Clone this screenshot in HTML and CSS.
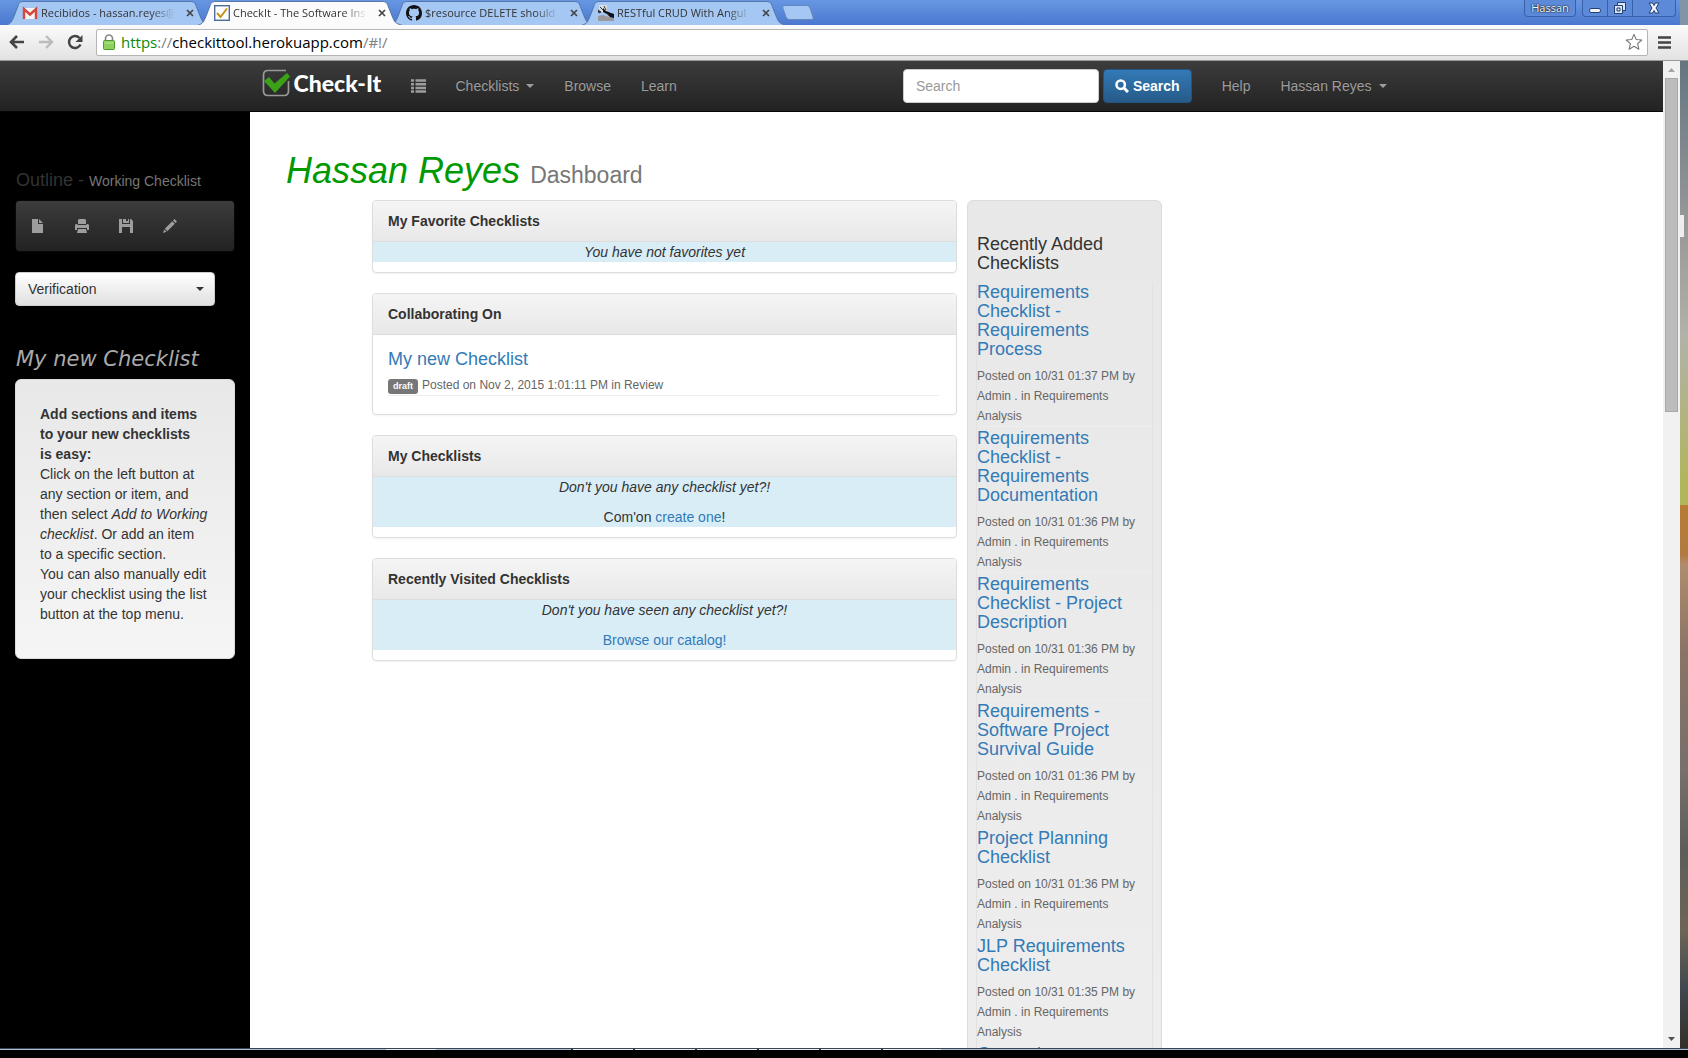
FILE: index.html
```html
<!DOCTYPE html>
<html lang="en">
<head>
<meta charset="utf-8">
<title>CheckIt - The Software Inspection Tool</title>
<link rel="stylesheet" href="styles.css">
</head>
<body>
<svg class="sprite" aria-hidden="true">
  <symbol id="tab-shape" viewBox="0 0 204 25" preserveAspectRatio="none">
    <path d="M0 25C5 24 6 21 8 16L12 5C13 1 15 .5 18 .5H184C188 .5 189 2 190 5L195 18C197 23 199 24 204 25Z" fill="currentColor"/>
    <path d="M0 25C5 24 6 21 8 16L12 5C13 1 15 .5 18 .5H184C188 .5 189 2 190 5L195 18C197 23 199 24 204 25" fill="none" stroke="#5574a8"/>
  </symbol>
  <symbol id="close" viewBox="0 0 8 8"><path d="M1 1l6 6M7 1L1 7" stroke="#444" stroke-width="1.7"/></symbol>
</svg>

<header class="chrome">
  <div class="tabstrip">
    <nav class="tabs" aria-label="Browser tabs">
      <div class="tab">
        <svg class="tab-bg"><use href="#tab-shape"/></svg>
        <svg class="favicon" viewBox="0 0 16 16"><rect x="1" y="3" width="14" height="11" fill="#f4f4f4"/><path d="M2 14V4l6 5.500 6-5.500V14" fill="none" stroke="#d5473b" stroke-width="2.400"/></svg>
        <span class="tab-title">Recibidos - hassan.reyes@</span>
        <button class="tab-close" aria-label="Close tab"><svg viewBox="0 0 8 8"><use href="#close"/></svg></button>
      </div>
      <div class="tab tab-active">
        <svg class="tab-bg"><use href="#tab-shape"/></svg>
        <svg class="favicon" viewBox="0 0 16 16"><rect x=".7" y=".7" width="14.600" height="14.600" fill="#fff" stroke="#4c6d99" stroke-width="1.400"/><path d="M3 8l3.500 4L13 3.500" fill="none" stroke="#c89116" stroke-width="2"/></svg>
        <span class="tab-title">CheckIt - The Software Ins</span>
        <button class="tab-close" aria-label="Close tab"><svg viewBox="0 0 8 8"><use href="#close"/></svg></button>
      </div>
      <div class="tab">
        <svg class="tab-bg"><use href="#tab-shape"/></svg>
        <svg class="favicon" viewBox="0 0 16 16"><path fill="#111" d="M8 0C3.580 0 0 3.580 0 8c0 3.540 2.290 6.530 5.470 7.590.4.070.550-.170.550-.380 0-.190-.010-.820-.010-1.490-2.010.370-2.530-.490-2.690-.940-.090-.230-.480-.940-.820-1.130-.280-.150-.680-.520-.010-.530.630-.010 1.080.580 1.230.820.720 1.210 1.870.870 2.330.660.070-.520.280-.870.510-1.070-1.780-.200-3.640-.890-3.640-3.950 0-.870.310-1.590.820-2.150-.080-.200-.360-1.020.080-2.120 0 0 .670-.210 2.200.820.640-.180 1.320-.270 2-.270s1.360.090 2 .270c1.530-1.040 2.200-.820 2.200-.820.440 1.100.160 1.920.080 2.120.510.560.820 1.270.820 2.150 0 3.070-1.870 3.750-3.650 3.950.290.250.540.730.540 1.480 0 1.070-.010 1.930-.010 2.200 0 .210.150.460.550.380A8.010 8.010 0 0 0 16 8c0-4.420-3.580-8-8-8z"/></svg>
        <span class="tab-title">$resource DELETE should</span>
        <button class="tab-close" aria-label="Close tab"><svg viewBox="0 0 8 8"><use href="#close"/></svg></button>
      </div>
      <div class="tab">
        <svg class="tab-bg"><use href="#tab-shape"/></svg>
        <svg class="favicon" viewBox="0 0 16 16"><path d="M1 0h8v7H1z" fill="#d9dde2"/><path d="M0 11l5-1 6 2 5-1v5H0z" fill="#999"/><path d="M5 3l3 3 5 2 3 1v4l-4-1-3-3-4-2z" fill="#111"/><path d="M0 5l3 2-2 1zM2 2l3 3M6 1l2 4" fill="#333" stroke="#333"/></svg>
        <span class="tab-title">RESTful CRUD With Angul</span>
        <button class="tab-close" aria-label="Close tab"><svg viewBox="0 0 8 8"><use href="#close"/></svg></button>
      </div>
      <button class="new-tab" aria-label="New tab"><svg viewBox="0 0 32 16"><path d="M3 .5H24C26 .5 27 1 28 3L31 12C31.500 14 31 14.500 29 14.500H8C6 14.500 5 14 4 12L.8 3C.4 1.500 1 .5 3 .5Z" fill="#a5c7f3" stroke="#6786bd"/></svg></button>
    </nav>
    <div class="window-controls">
      <button class="user-badge">Hassan</button>
      <div class="window-buttons">
        <button aria-label="Minimize"><svg viewBox="0 0 14 14"><path d="M3 7.500h8q1.500 0 1.500 2t-1.500 2H3q-1.500 0-1.500-2t1.500-2z" fill="#eef3fc" stroke="#24406f"/></svg></button>
        <button aria-label="Restore"><svg viewBox="0 0 14 14"><path d="M4.500 1.500h8v8h-3v3h-8v-8h3z" fill="#dbe6f9" stroke="#24406f"/><path d="M4.500 4.500h5v5M4 7h3v3H4z" fill="none" stroke="#24406f"/></svg></button>
        <button class="window-close" aria-label="Close"><svg viewBox="0 0 14 14"><path d="M2 2h3.500L7 4.500 8.500 2H12L9 7l3 5H8.500L7 9.500 5.500 12H2l3-5z" fill="#eef3fc" stroke="#24406f"/></svg></button>
      </div>
    </div>
    <div class="desktop-top"></div>
  </div>

  <div class="toolbar">
    <button class="tool" aria-label="Back"><svg viewBox="0 0 16 16"><path d="M15 8H2M8 2L2 8l6 6" fill="none" stroke="#444" stroke-width="2.600"/></svg></button>
    <button class="tool" aria-label="Forward"><svg viewBox="0 0 16 16"><path d="M1 8h13M8 2l6 6-6 6" fill="none" stroke="#bbb" stroke-width="2.400"/></svg></button>
    <button class="tool" aria-label="Reload"><svg viewBox="0 0 16 16"><path d="M13.500 10.500A6 6 0 1 1 12.500 4" fill="none" stroke="#444" stroke-width="2.500"/><path d="M15.500 1v7h-7z" fill="#444"/></svg></button>
    <div class="address">
      <svg class="lock" viewBox="0 0 12 16"><path d="M2.500 8V4.500a3.500 3.500 0 0 1 7 0V8" fill="none" stroke="#888" stroke-width="1.700"/><rect x=".5" y="6.500" width="11" height="9" rx="1" fill="#8ed05d" stroke="#4f9a2c"/><path d="M1.500 9h9" stroke="#b7e59a"/></svg>
      <p class="url"><span class="url-scheme">https</span><span class="url-dim">://</span>checkittool.herokuapp.com<span class="url-dim">/#!/</span></p>
      <button class="star" aria-label="Bookmark"><svg viewBox="0 0 20 20"><path d="M10 1.500l2.500 5.700 6.200.6-4.700 4.100 1.400 6.100L10 14.800 4.600 18 6 11.900 1.300 7.800l6.200-.6z" fill="#fff" stroke="#777" stroke-width="1.200" stroke-linejoin="round"/></svg></button>
    </div>
    <button class="menu" aria-label="Menu"><svg viewBox="0 0 13 13"><path d="M0 1.500h13M0 6.500h13M0 11.500h13" stroke="#444" stroke-width="2.500"/></svg></button>
  </div>
</header>

<div class="viewport">
  <div class="page">
    <header class="navbar">
      <div class="navbar-inner">
        <a class="brand" href="#">
          <svg viewBox="0 0 30 28"><path d="M24 1.500H6Q1.500 1.500 1.500 6V22Q1.500 26.500 6 26.500H22Q26.500 26.500 26.500 22V12" fill="none" stroke="#999" stroke-width="1.700"/><path d="M2 12l5-4 5.500 6.500L25 4l3 3.500L13 24Z" fill="#3ba218"/></svg>
          <span>Check-It</span>
        </a>
        <nav class="nav">
          <a href="#" aria-label="Outline"><svg class="icon list-icon" viewBox="0 0 15 14"><path d="M0 1.500h3M4.500 1.500H15M0 5.200h3M4.500 5.200H15M0 8.900h3M4.500 8.900H15M0 12.600h3M4.500 12.600H15" stroke="#9d9d9d" stroke-width="2.500"/></svg></a>
          <a href="#">Checklists<i class="caret"></i></a>
          <a href="#">Browse</a>
          <a href="#">Learn</a>
        </nav>
        <form class="search">
          <input type="text" placeholder="Search" aria-label="Search">
          <button type="button"><svg class="icon" viewBox="0 0 14 14"><circle cx="5.700" cy="5.700" r="4.200" fill="none" stroke="#fff" stroke-width="2.500"/><path d="M9 9l4 4" stroke="#fff" stroke-width="3"/></svg>Search</button>
        </form>
        <nav class="nav">
          <a href="#">Help</a>
          <a href="#">Hassan Reyes<i class="caret"></i></a>
        </nav>
      </div>
    </header>

    <div class="columns">
      <aside class="sidebar">
        <h4 class="outline-title">Outline - <small>Working Checklist</small></h4>
        <div class="outline-tools">
          <button aria-label="New"><svg viewBox="0 0 14 14"><path d="M1 0h6v5h5v9H1zM8 0l4 4H8z" fill="#9d9d9d"/></svg></button>
          <button aria-label="Print"><svg viewBox="0 0 14 14"><path d="M4 0h6l1 1v4H3V1zM1 5h1.500v1h9V5H13l1 1v5h-2V9H2v2H0V6zM3 10h8l1 4H2z" fill="#9d9d9d"/></svg></button>
          <button aria-label="Save"><svg viewBox="0 0 14 14"><path d="M0 0h3v5h8V0h1l2 2v12h-3V8H3v6H0zM4 0h3v2h2V0h1v4H4z" fill="#9d9d9d"/></svg></button>
          <button aria-label="Edit"><svg viewBox="0 0 14 14"><path d="M11.500 0L14 2.500 12.500 4 10 1.500zM9.300 2.200l2.500 2.500-7.500 7.500-2.500-2.500zM1.200 10.400l2.400 2.400L0 14z" fill="#9d9d9d"/></svg></button>
        </div>
        <div class="picker">
          <select aria-label="Checklist type"><option>Verification</option></select>
          <i class="caret"></i>
        </div>
        <h3 class="checklist-title">My new Checklist</h3>
        <div class="help-box">
          <p><strong>Add sections and items to your new checklists is&nbsp;easy:</strong><br>
          Click on the left button at any section or item, and then select <em>Add to Working checklist</em>. Or add an item to&nbsp;a specific section.<br>
          You can also manually edit your checklist using the list button at the top menu.</p>
        </div>
      </aside>

      <main class="content">
        <h1><em>Hassan Reyes</em> <small>Dashboard</small></h1>
        <div class="dashboard">
          <div class="panels">
            <section class="panel">
              <h2>My Favorite Checklists</h2>
              <div class="notice"><p><em>You have not favorites yet</em></p></div>
            </section>
            <section class="panel">
              <h2>Collaborating On</h2>
              <div class="panel-body">
                <h3><a href="#">My new Checklist</a></h3>
                <p class="meta"><span class="label">draft</span>Posted on Nov 2, 2015 1:01:11 PM in Review</p>
              </div>
            </section>
            <section class="panel">
              <h2>My Checklists</h2>
              <div class="notice"><p><em>Don't you have any checklist yet?!</em></p><p>Com'on <a href="#">create one</a>!</p></div>
            </section>
            <section class="panel">
              <h2>Recently Visited Checklists</h2>
              <div class="notice"><p><em>Don't you have seen any checklist yet?!</em></p><p><a href="#">Browse our catalog!</a></p></div>
            </section>
          </div>

          <aside class="recent">
            <h4>Recently Added Checklists</h4>
            <ul>
              <li><a href="#">Requirements Checklist - Requirements Process</a><p>Posted on 10/31 01:37 PM by Admin . in Requirements Analysis</p></li>
              <li><a href="#">Requirements Checklist - Requirements Documentation</a><p>Posted on 10/31 01:36 PM by Admin . in Requirements Analysis</p></li>
              <li><a href="#">Requirements Checklist - Project Description</a><p>Posted on 10/31 01:36 PM by Admin . in Requirements Analysis</p></li>
              <li><a href="#">Requirements - Software Project Survival Guide</a><p>Posted on 10/31 01:36 PM by Admin . in Requirements Analysis</p></li>
              <li><a href="#">Project Planning Checklist</a><p>Posted on 10/31 01:36 PM by Admin . in Requirements Analysis</p></li>
              <li><a href="#">JLP Requirements Checklist</a><p>Posted on 10/31 01:35 PM by Admin . in Requirements Analysis</p></li>
              <li><a href="#">General</a><p>Posted on 10/31 01:35 PM by Admin . in Requirements Analysis</p></li>
            </ul>
          </aside>
        </div>
      </main>
    </div>
  </div>

  <div class="scrollbar">
    <svg viewBox="0 0 7 4"><path d="M0 4h7L3.500 0z" fill="#a3a3a3"/></svg>
    <div class="thumb"></div>
    <svg class="arrow-down" viewBox="0 0 7 4"><path d="M0 0h7L3.500 4z" fill="#505050"/></svg>
  </div>
  <div class="desktop"><div class="desktop-handle"></div></div>
</div>
<footer class="window-edge"></footer>
</body>
</html>
```
FILE: styles.css
```css
* { box-sizing: border-box; }

body {
  margin: 0;
  height: 100vh;
  display: flex;
  flex-direction: column;
  overflow: hidden;
  background: #000;
  color: #333;
  font: 14px/20px "Liberation Sans", Arial, sans-serif;
}

button { font: inherit; border: 0; background: none; padding: 0; margin: 0; }
svg { display: block; }
h1, h2, h3, h4, p, ul { margin: 0; padding: 0; font-weight: normal; }
ul { list-style: none; }
a { color: #337ab7; text-decoration: none; }
.sprite { display: none; }

/* Browser frame */
.chrome { flex: none; font-family: "Open Sans", "Noto Sans", sans-serif; }

.tabstrip {
  display: flex;
  height: 25px;
  background: linear-gradient(#6797e2, #4a78cf);
}
.tabs { display: flex; flex: 1; padding-left: 10px; }
.tab {
  position: relative;
  display: flex;
  align-items: center;
  width: 192px;
  padding: 0 8px 0 12px;
  color: #a5c7f3;
}
.tab-active { z-index: 1; color: #fbfbfb; }
.tab-bg { position: absolute; left: -4px; top: 1px; width: 204px; height: 24px; }
.favicon { position: relative; width: 16px; height: 16px; flex: none; }
.tab-title {
  position: relative;
  flex: 1;
  margin-left: 3px;
  overflow: hidden;
  white-space: nowrap;
  color: #333;
  font-size: 11px;
  -webkit-mask-image: linear-gradient(90deg, #000 80%, transparent 98%);
  mask-image: linear-gradient(90deg, #000 80%, transparent 98%);
}
.tab-close { position: relative; width: 8px; margin: 0 0 0 8px; }
.tab-close svg { width: 8px; height: 8px; }
.new-tab { margin: 5px 0 0 4px; align-self: flex-start; }
.new-tab svg { width: 32px; height: 16px; }

.window-controls { display: flex; align-items: flex-start; gap: 6px; margin-right: 4px; }
.user-badge {
  height: 17px;
  width: 52px;
  border: 1px solid #3860a8;
  border-top: 0;
  border-radius: 0 0 4px 4px;
  background: #5c8ad9;
  color: #fff;
  font-size: 11px;
  line-height: 16px;
  text-shadow: 0 0 2px #000, 0 0 1px #000;
}
.window-buttons {
  display: flex;
  height: 17px;
  border: 1px solid #3860a8;
  border-top: 0;
  border-radius: 0 0 4px 4px;
  background: #5c8ad9;
}
.window-buttons button { width: 25px; display: flex; justify-content: center; align-items: center; border-right: 1px solid #3860a8; }
.window-buttons .window-close { width: 42px; border: 0; }
.window-buttons svg { width: 14px; height: 14px; }
.desktop-top { width: 8px; background: #8394a6; }

.toolbar {
  display: flex;
  align-items: center;
  height: 36px;
  padding: 0 17px 1px 9px;
  background: linear-gradient(#fbfbfb, #e2e2e2);
  border-bottom: 1px solid #9b9b9b;
}
.tool { width: 16px; margin-right: 13px; }
.tool svg { width: 16px; height: 16px; }
.address {
  flex: 1;
  display: flex;
  align-items: center;
  height: 27px;
  margin-right: 10px;
  padding: 0 4px 0 6px;
  background: #fff;
  border: 1px solid #b5b5b5;
  border-radius: 2px;
}
.lock { width: 12px; height: 16px; }
.url { flex: 1; margin-left: 6px; color: #000; font-size: 15px; white-space: nowrap; }
.url-scheme { color: #0c8a0c; }
.url-dim { color: #808080; }
.star svg { width: 18px; height: 18px; }
.menu { width: 13px; }
.menu svg { width: 13px; height: 13px; }

.viewport { flex: 1; min-height: 0; display: flex; }
.page { flex: 1; min-width: 0; display: flex; flex-direction: column; overflow: hidden; background: #fff; }

/* Top navigation */
.navbar {
  flex: none;
  background: linear-gradient(#3c3c3c, #222);
  border-bottom: 1px solid #080808;
}
.navbar-inner {
  display: flex;
  align-items: center;
  max-width: 1170px;
  height: 50px;
  margin: 0 auto;
  padding: 0 15px;
}
.brand { display: flex; align-items: center; gap: 2px; width: 134px; padding-bottom: 6px; color: #fff; font: 900 23px/28px Lato, sans-serif; }
.brand svg { width: 30px; height: 28px; }
.nav { display: flex; }
.nav a { display: flex; align-items: center; padding: 15px; color: #9d9d9d; text-shadow: 0 -1px 0 rgba(0, 0, 0, .25); white-space: nowrap; }
.icon { width: 14px; height: 14px; }
.list-icon { width: 15px; }
.caret {
  display: inline-block;
  margin-left: 7px;
  border: 4px solid transparent;
  border-top-color: currentColor;
  border-bottom: 0;
}
.search { display: flex; gap: 4px; margin-left: auto; }
.search input {
  width: 196px;
  height: 34px;
  padding: 6px 12px;
  border: 1px solid #ccc;
  border-radius: 4px;
  background: #fff;
  font: inherit;
}
.search input::placeholder { color: #999; opacity: 1; }
.search button {
  display: flex;
  align-items: center;
  gap: 4px;
  height: 34px;
  padding: 0 11px;
  border: 1px solid #245580;
  border-radius: 4px;
  background: linear-gradient(#337ab7, #265a88);
  color: #fff;
  font-weight: bold;
}
.search + .nav { margin-left: 15px; }

/* Outline sidebar */
.columns { flex: 1; min-height: 0; display: flex; }
.sidebar { flex: 0 0 250px; padding: 58px 15px 0; background: #000; }
.outline-title { margin: 0 1px 9px; font-size: 18px; line-height: 20px; }
.outline-title small { color: #777; font-size: 14px; }
.outline-tools {
  display: flex;
  gap: 30px;
  height: 52px;
  margin: 0 0 20px;
  padding: 16px 15px;
  border: 1px solid #080808;
  border-radius: 4px;
  background: linear-gradient(#3c3c3c, #222);
}
.outline-tools svg { width: 14px; height: 14px; }
.picker { position: relative; width: 200px; color: #333; }
.picker select {
  display: block;
  width: 100%;
  height: 34px;
  padding: 0 12px;
  appearance: none;
  border: 1px solid #ccc;
  border-radius: 4px;
  background: linear-gradient(#fff, #e0e0e0);
  color: #333;
  font: inherit;
}
.picker .caret { position: absolute; right: 11px; top: 15px; pointer-events: none; }
.checklist-title {
  margin: 39px 1px 6px;
  color: #aaa;
  font: italic 21px/28px "DejaVu Sans", Verdana, sans-serif;
  white-space: nowrap;
}
.help-box {
  padding: 24px 20px 34px 24px;
  border: 1px solid #dcdcdc;
  border-radius: 6px;
  background: linear-gradient(#e8e8e8, #f5f5f5);
}

/* Dashboard */
.content { flex: 1; min-width: 0; padding: 39px 15px 0 36px; background: #fff; }
h1 { margin-bottom: 5px; font-size: 36px; line-height: 40px; color: #090; }
h1 small { color: #777; font-size: 23px; }
.dashboard {
  display: grid;
  grid-template-columns: minmax(0, 585px) minmax(0, 195px);
  gap: 10px;
  align-items: start;
  margin-left: 86px;
}
.panels { display: grid; gap: 20px; }
.panel {
  padding-bottom: 10px;
  border: 1px solid #ddd;
  border-radius: 4px;
  box-shadow: 0 1px 2px rgba(0, 0, 0, .05);
}
.panel h2 {
  padding: 10px 15px;
  border-bottom: 1px solid #ddd;
  border-radius: 3px 3px 0 0;
  background: linear-gradient(#f5f5f5, #e8e8e8);
  font-size: 14px;
  line-height: 20px;
  font-weight: bold;
}
.notice { display: grid; gap: 10px; background: #d9edf7; text-align: center; }
.panel-body { padding: 14px 15px 8px; }
.panel-body h3 { margin-bottom: 6px; font-size: 18px; line-height: 20px; }
.meta { margin-right: 2px; border-bottom: 1px solid #eee; color: #666; font-size: 12px; line-height: 20px; }
.label {
  display: inline-block;
  margin-right: 4px;
  padding: 3px 5px;
  border-radius: 3px;
  background: #777;
  color: #fff;
  font-size: 9px;
  line-height: 9px;
  font-weight: bold;
}
.recent {
  padding: 34px 8px;
  border: 1px solid #dcdcdc;
  border-radius: 6px;
  background: linear-gradient(#e8e8e8, #eee);
}
.recent h4 { margin: 0 1px 10px; font-size: 18px; line-height: 19px; }
.recent ul { border: solid #e2e2e2; border-width: 0 1px; }
.recent li { padding-bottom: 2px; }
.recent li a { display: block; margin-bottom: 7px; font-size: 18px; line-height: 19px; }
.recent li p { border-bottom: 1px solid #eee; color: #666; font-size: 12px; line-height: 20px; }

/* Page scrollbar and the desktop beside the window */
.scrollbar {
  flex: 0 0 17px;
  display: flex;
  flex-direction: column;
  align-items: center;
  padding: 7px 0;
  background: #f1f1f1;
}
.scrollbar svg { width: 7px; height: 4px; flex: none; }
.thumb { width: 13px; height: 34.3%; margin-top: 6px; border: 1px solid #a8a8a8; background: #bcbcbc; }
.arrow-down { margin-top: auto; }
.desktop {
  flex: 0 0 8px;
  padding-top: 154px;
  background: linear-gradient(#647681, #999 17%, #b2b2a8 28%, #b0b65c 43%, #b0b65c 45%, #b77b35 45%, #b17b40 50%, #b08c6d 51%, #8a7466 60%, #77706c 72%, #5d5e5a 80%, #6d6557 88%, #40474e 94%, #34302a);
}
.desktop-handle { width: 4px; height: 22px; background: #eee; }
.window-edge {
  flex: none;
  height: 10px;
  border-top: 1px solid #384450;
  background:
    repeating-linear-gradient(90deg, #333 0 2px, #e8eef4 2px 62px) 571px 0 / 370px 1px no-repeat,
    linear-gradient(#e8eef4, #e8eef4) 386px 0 / 50px 1px no-repeat,
    linear-gradient(#a9c0d8, #a9c0d8) top / 100% 1px no-repeat,
    #000;
}
```
